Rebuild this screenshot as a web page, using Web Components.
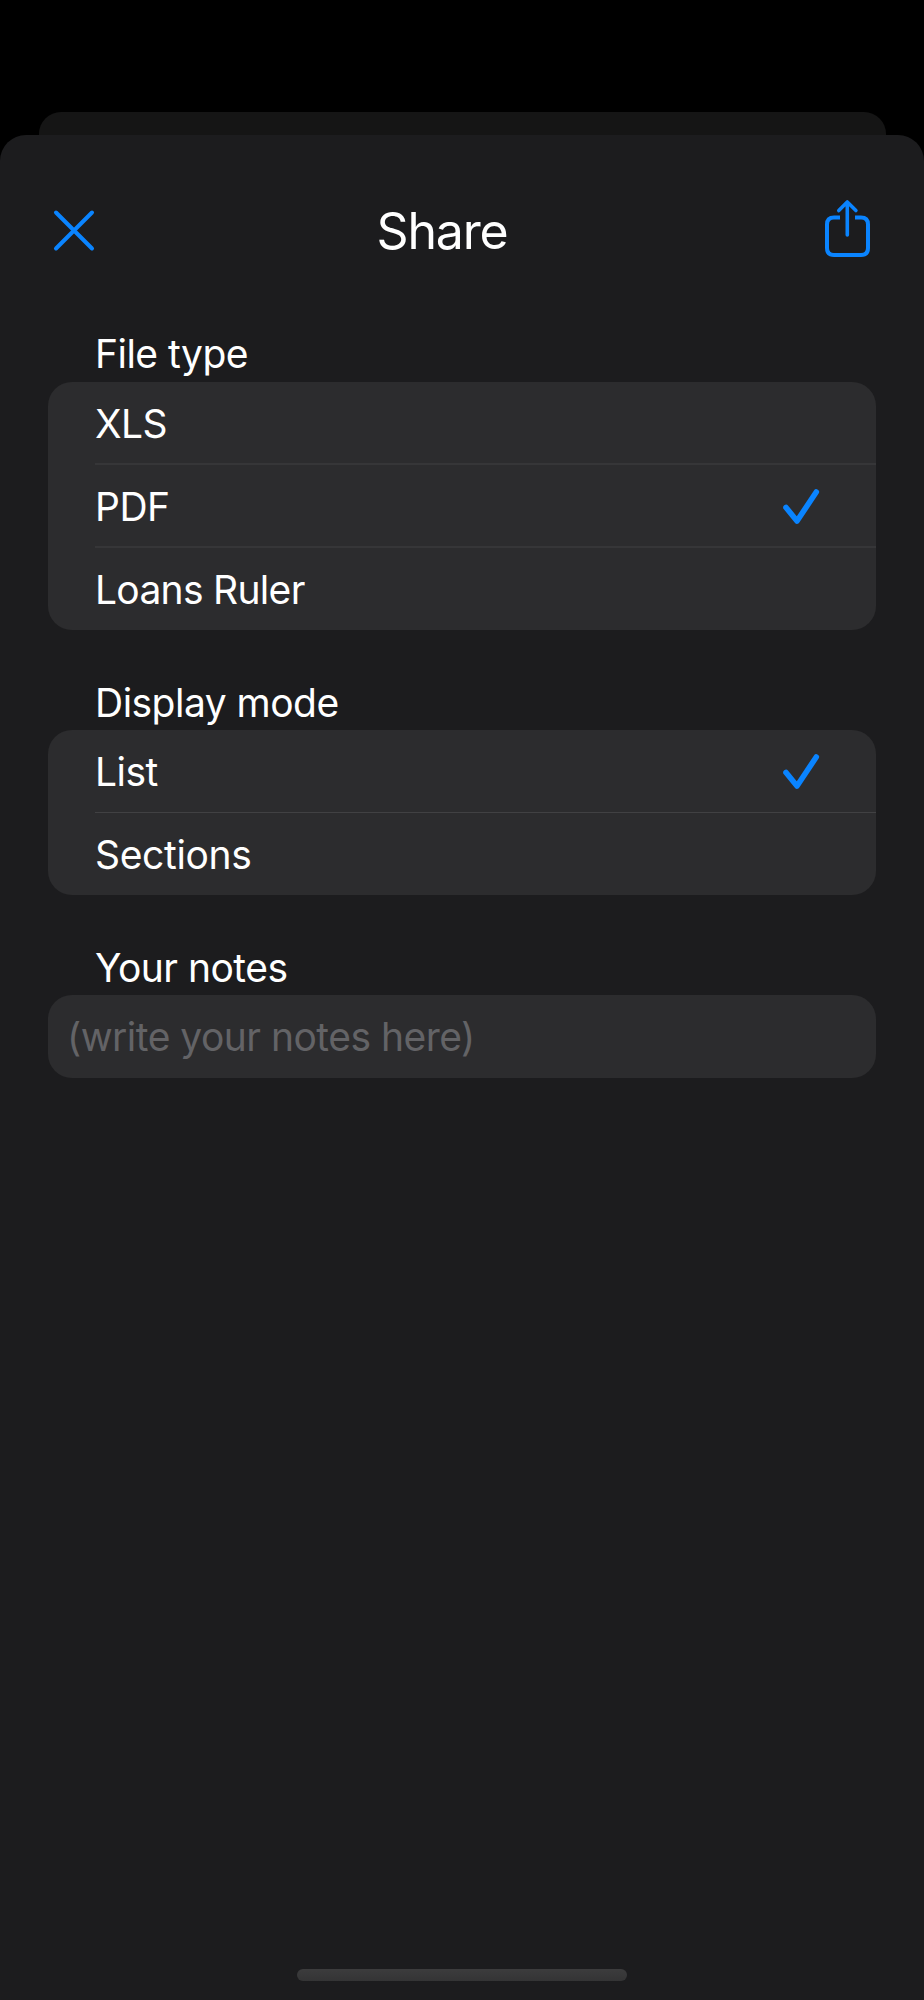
<!DOCTYPE html>
<html lang="en">
<head>
<meta charset="utf-8">
<title>Share</title>
<style>
	html, body {
		margin: 0;
		background: #000;
	}
	body {
		font-family: Inter, "Liberation Sans", sans-serif;
		color: #fff;
	}
</style>
</head>
<body>
<share-sheet>
	<sheet-header slot="header">Share</sheet-header>
	<option-group style="--line: 2px; --line-color: #363638">
		<span slot="label">File type</span>
		<option-row>XLS</option-row>
		<option-row selected>PDF</option-row>
		<option-row style="letter-spacing: -0.7px">Loans Ruler</option-row>
	</option-group>
	<option-group>
		<span slot="label">Display mode</span>
		<option-row selected>List</option-row>
		<option-row style="letter-spacing: -0.35px">Sections</option-row>
	</option-group>
	<option-group>
		<span slot="label">Your notes</span>
		<note-field>(write your notes here)</note-field>
	</option-group>
</share-sheet>
<script>
(function()  {
	function define(name, html) {
		let template = document.createElement("template");
		template.innerHTML = html;
		customElements.define(name, class extends HTMLElement {
			constructor() {
				super();
				this.attachShadow({mode: "open"}).appendChild(template.content.cloneNode(true));
			}
		});
	}

	define("share-sheet", `
		<style>
		:host {
			display: flex;
			flex-direction: column;
			box-sizing: border-box;
			height: 2000px;
			padding-top: 112px;
			background: #000;
			overflow: hidden;
			font-size: 39px;
			letter-spacing: -0.52px;
		}
		.behind {
			flex: none;
			height: 23px;
			margin: 0 38px 0 39px;
			border-radius: 22px 22px 0 0;
			background: #151515;
		}
		.sheet {
			flex: 1;
			display: flex;
			flex-direction: column;
			border-radius: 26px 26px 0 0;
			background: #1c1c1e;
		}
		main {
			flex: 1;
			padding: 0 48px;
		}
		.home {
			width: 330px;
			height: 12px;
			margin: 0 auto 19px 297px;
			border-radius: 6px;
			background: linear-gradient(#3c3c3d, #343435);
		}
		</style>
		<div class="behind"></div>
		<div class="sheet">
			<slot name="header"></slot>
			<main><slot></slot></main>
			<div class="home"></div>
		</div>
	`);

	define("sheet-header", `
		<style>
		:host {
			display: flex;
			justify-content: space-between;
			align-items: flex-start;
			height: 197px;
			padding: 60px 50px 0;
			box-sizing: border-box;
		}
		svg {
			display: block;
			fill: none;
			stroke: #0a84ff;
			stroke-width: 4;
			stroke-linecap: round;
		}
		h1 {
			margin: 6px 36px 0 0;
			font-size: 50px;
			line-height: 60px;
			font-weight: 400;
			letter-spacing: -1.2px;
		}
		</style>
		<svg width="48" height="72" viewBox="50 195 48 72">
			<path d="M56 212.5L92 248.5M92 212.5L56 248.5"/>
		</svg>
		<h1><slot></slot></h1>
		<svg width="52" height="72" viewBox="822 195 52 72">
			<path d="M847.3 202V235M838.8 210.6L847.3 202L855.9 210.6" stroke-width="3.6" stroke-linejoin="round"/>
			<path d="M840 217.5H834Q827 217.5 827 224.5V248Q827 255 834 255H861Q868 255 868 248V224.5Q868 217.5 861 217.5H855" stroke-linecap="butt"/>
		</svg>
	`);

	define("option-group", `
		<style>
		:host {
			display: block;
			margin-bottom: 50px;
		}
		header {
			height: 50px;
			padding-left: 47px;
			line-height: 44px;
			box-sizing: border-box;
		}
		:host(:not(:first-of-type)) header {
			padding-top: 1px;
		}
		.card {
			border-radius: 24px;
			background: #2c2c2e;
			overflow: hidden;
		}
		</style>
		<header><slot name="label"></slot></header>
		<div class="card"><slot></slot></div>
	`);

	define("option-row", `
		<style>
		:host {
			display: flex;
			justify-content: space-between;
			align-items: center;
			height: 83px;
			margin-left: 47px;
			padding-right: 55px;
			box-sizing: border-box;
			border-bottom: var(--line, 1px) solid var(--line-color, #414143);
			line-height: 48px;
		}
		:host(:last-of-type) {
			height: 82px;
			border-bottom: 0;
		}
		span {
			padding-top: 2px;
		}
		svg {
			display: none;
			fill: none;
			stroke: #0a84ff;
			stroke-width: 5.6;
			stroke-linecap: round;
			stroke-linejoin: round;
		}
		:host([selected]) svg {
			display: block;
		}
		</style>
		<span><slot></slot></span>
		<svg width="40" height="48" viewBox="781 482 40 48">
			<path d="M786 507.5L797 521L816.3 492"/>
		</svg>
	`);

	define("note-field", `
		<style>
		:host {
			display: block;
			height: 83px;
			padding-left: 19px;
			box-sizing: border-box;
			color: #636366;
			line-height: 84px;
		}
		</style>
		<slot></slot>
	`);
})();
</script>
</body>
</html>
